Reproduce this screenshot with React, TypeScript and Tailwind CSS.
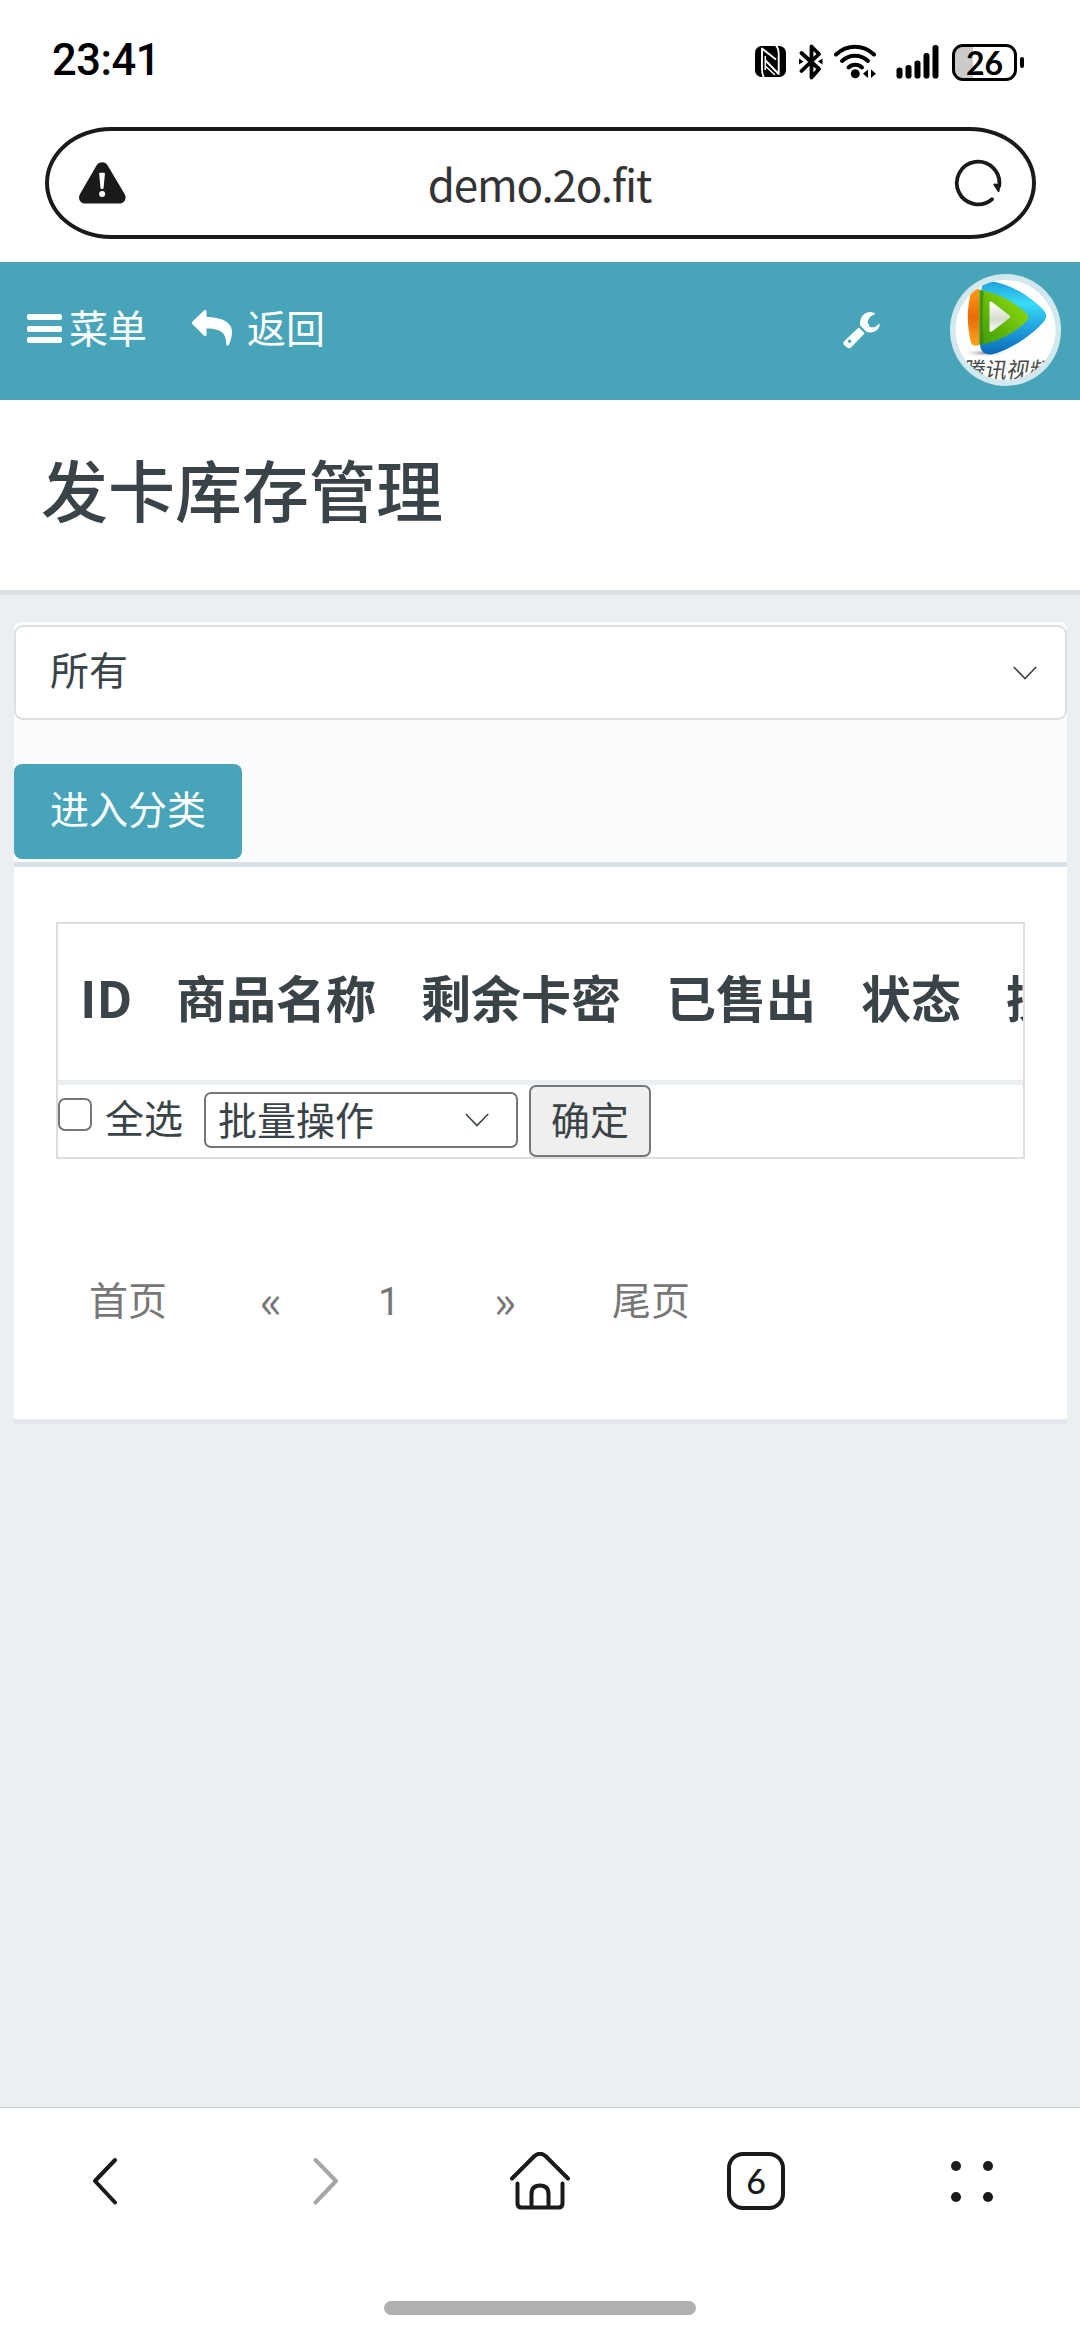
import React from "react";

type IconProps = {
  className?: string;
};

const COLUMNS = ["ID", "商品名称", "剩余卡密", "已售出", "状态", "操作"];

const NfcIcon = () => (
  <svg className="w-[31px] h-[31px] shrink-0" viewBox="755 46 31 31">
    <rect x="755" y="46" width="31" height="31" rx="6.5" fill="#000" />
    <g fill="none" stroke="#fff" strokeWidth="1.900" strokeLinejoin="round">
      <path d="M764 77.500c-1.500-2-2-5-2-9V48.500l14 11" />
      <path d="M776 45.500c2 2 2.700 5 2.700 9v19.500L765.500 60.500" />
      <path d="M765.300 56v14M765.300 66l9.700 9" strokeWidth="1.500" />
    </g>
  </svg>
);

const BluetoothIcon = () => (
  <svg className="w-[24px] h-[36px] shrink-0" viewBox="799 44 24 36" fill="none" stroke="#000">
    <path d="M801.500 53l17.500 16-7.500 8.500V46.500l7.500 7.500-17.500 17" strokeWidth="3.800" strokeLinejoin="round" strokeLinecap="round" />
    <path d="M799 58.500v6l4.500-3zM822.500 58.500v6l-4.500-3z" fill="#000" stroke="none" />
  </svg>
);

const WifiIcon = () => (
  <svg className="w-[44px] h-[36px] shrink-0" viewBox="834 44 44 36" fill="none" stroke="#000" strokeWidth="4" strokeLinecap="round">
    <path d="M836 54.500c11-10.500 27-10.500 38 0" />
    <path d="M842 61c7.500-7 18.500-7 26 0" />
    <path d="M848.500 67.500c4-3.700 9.500-3.700 13.500 0" />
    <circle cx="855.300" cy="73.700" r="4.500" fill="#000" stroke="none" />
    <path d="M868 69.500v8.500l-5-4.200zM871 69.500v8.500l5-4.200z" fill="#000" stroke="none" />
  </svg>
);

const SignalIcon = () => (
  <svg className="w-[43px] h-[34px] shrink-0" viewBox="896 45 43 34" fill="#000">
    <rect x="896.500" y="67.500" width="6" height="11" rx="2.800" />
    <rect x="905.500" y="65" width="6" height="13.500" rx="2.800" />
    <rect x="914.500" y="60.500" width="6" height="18" rx="2.800" />
    <rect x="923.500" y="53" width="6" height="25.500" rx="2.800" />
    <rect x="932.500" y="45" width="6" height="33.500" rx="2.800" />
  </svg>
);

const WarningIcon = () => (
  <svg className="w-[47px] h-[42px] shrink-0" viewBox="79 162.500 47 42">
    <path
      d="M96.500 166c2.500-4.300 8.700-4.300 11.200 0l16.900 28.500c2.500 4.300-.2 9.500-5 9.500H85c-4.900 0-7.500-5.200-5-9.500z"
      fill="#1a1a1a"
    />
    <path d="M99.200 174.300c0-.8.600-1.100 1.200-1.100h3.300c.6 0 1.200.3 1.200 1.100l-1.300 14.200c-.2 1.400-2.900 1.400-3.100 0z" fill="#fff" />
    <circle cx="102.100" cy="194.600" r="3" fill="#fff" />
  </svg>
);

const ReloadIcon = () => (
  <svg className="w-[48px] h-[48px] shrink-0" viewBox="953.500 159 48 48" fill="none" stroke="#1a1a1a" strokeWidth="3.800" strokeLinecap="round">
    <path d="M991.500 199.200A21.300 21.300 0 1 1 998.700 186" />
    <path d="M993.800 184.500l5.200.5-1 6z" fill="#1a1a1a" strokeWidth="2" strokeLinejoin="round" />
  </svg>
);

const ReplyIcon = () => (
  <svg className="w-[40px] h-[36px] shrink-0" viewBox="192 310.500 40 36" fill="#fff">
    <path d="M192.300 322.200l11.600-11.200c1.200-1.100 2.600-.5 2.600 1v5.500c15.500.300 25.500 5.500 25.500 14.500 0 5.500-1.700 10-3.400 14h-2.300c.3-12-4.500-16.800-19.800-17v6c0 1.600-1.400 2.100-2.600 1l-11.600-11.600c-.7-.7-.7-1.500 0-2.200z" />
  </svg>
);

const WrenchIcon = () => (
  <svg className="w-[37px] h-[37px] shrink-0" viewBox="843 311.500 37 37" fill="#fff">
    <path d="M875.200 313.500l-5.200 2.700-2.500 4.800 2.300 5.700h5l4.800-3.700c.5 4.700-3.700 9-9.300 9-1.500 0-3-.4-4.200-1l-6-6c-.9-6.800 3.500-13.500 10-13.500 2 0 4 .6 5.100 2z" />
    <path
      fillRule="evenodd"
      d="M858.700 327l6 5.800-13.200 13.800c-1.300 1.400-3 1.500-4.200.6l-3.200-2.600c-1.100-1.100-1-2.700 0-3.800zM849.600 339a1.700 1.700 0 1 0 .01 0z"
    />
  </svg>
);

const Chevron = ({ className }: IconProps) => (
  <svg className={`w-[24px] h-[14px] shrink-0 ${className ?? ""}`} viewBox="0 0 24 14" fill="none" stroke="#3d4446" strokeWidth="1.600">
    <path d="M.8 1L12 12.500 23.200 1" />
  </svg>
);

const Avatar = () => (
  <div className="w-[111px] h-[112px] shrink-0 rounded-full overflow-hidden">
    <svg className="block w-full h-full" viewBox="950 274 111 112">
      <defs>
        <linearGradient id="blue" x1="0" y1="0" x2="0" y2="1">
          <stop offset="0" stopColor="#1fa0dc" />
          <stop offset=".3" stopColor="#38dcf5" />
          <stop offset=".6" stopColor="#25a8e4" />
          <stop offset="1" stopColor="#0868b4" />
        </linearGradient>
        <linearGradient id="green" x1="0" y1="1" x2="1" y2="0">
          <stop offset="0" stopColor="#3d9a08" />
          <stop offset="1" stopColor="#9ae30c" />
        </linearGradient>
        <linearGradient id="orange" x1="0" y1="0" x2="0" y2="1">
          <stop offset="0" stopColor="#ff9a12" />
          <stop offset=".5" stopColor="#e86c08" />
          <stop offset="1" stopColor="#ffa51c" />
        </linearGradient>
        <linearGradient id="play" x1="0" y1="0" x2="0" y2="1">
          <stop offset="0" stopColor="#fff" />
          <stop offset=".6" stopColor="#d5ddcc" />
          <stop offset="1" stopColor="#fff" />
        </linearGradient>
        <radialGradient id="shade">
          <stop offset="0" stopColor="#888" />
          <stop offset="1" stopColor="#fff" stopOpacity="0" />
        </radialGradient>
        <clipPath id="face">
          <circle cx="1005.500" cy="330" r="50" />
        </clipPath>
      </defs>
      <rect x="950" y="274" width="111" height="112" fill="#d1e8ee" />
      <circle cx="1005.500" cy="330" r="50" fill="#fff" />
      <g clipPath="url(#face)">
        <ellipse cx="985" cy="353" rx="24" ry="4" fill="url(#shade)" />
        <path d="M981.500 289c0-6 5-8.500 12-7.500 17 3 37 15 50 28.500 3.500 4 3.500 8 0 12-12 13.500-31 26.500-49 31.800-8 2-14-1-14.500-9z" fill="url(#blue)" />
        <path d="M971 292c1-3 3-3.500 8.500-2.500v55.500c-5 1.500-7.500.5-8.300-2-4.500-17-4.500-34-.2-51z" fill="url(#orange)" />
        <path d="M979.500 290c15 2 34 11 47.500 24 2 2.200 2 4.500 0 6.800-12 12-30 21.500-47.500 24z" fill="url(#green)" />
        <path d="M979.500 290c2.500.3 3 1 4.500 2-2 15-2 34 0 51.500-1 .5-2 .6-4.500 1.300z" fill="#2f8512" opacity=".65" />
        <path d="M989.500 303c0-1.500 1.200-2 2.400-1.200l17.600 13.700c1 .8 1 1.700 0 2.500l-17.600 13.400c-1.200.8-2.400.3-2.400-1.200z" fill="url(#play)" />
        <text x="0" y="0" transform="translate(962 377.500) skewX(-10)" fontSize="22" fontFamily="'Noto Sans CJK SC', sans-serif" fill="#4a4a4a">
          腾讯视频
        </text>
      </g>
    </svg>
  </div>
);

// Barre d'état du téléphone
const StatusBar = () => (
  <div className="flex items-start h-[127px] pl-[52px]">
    <span className="mt-[36px] w-[120px] font-['Roboto','Noto_Sans_CJK_SC',sans-serif] font-medium text-[43.5px] leading-[50px] tracking-[-0.5px] text-black">
      23:41
    </span>
    <div className="flex ml-[583px] mt-[44px]">
      <div className="mt-[2px] mr-[13px]">
        <NfcIcon />
      </div>
      <BluetoothIcon />
      <div className="ml-[11px]">
        <WifiIcon />
      </div>
      <div className="ml-[18px] mt-px">
        <SignalIcon />
      </div>
      <div className="relative ml-[13px] w-[65px] h-[37px] rounded-[11px] border-[3px] border-black overflow-hidden bg-linear-to-r from-[#cbcbcb] from-[31%] to-white to-[31%] flex items-center justify-center">
        <span className="font-['Lato',sans-serif] font-bold text-[32px] leading-[32px] text-black">26</span>
      </div>
      <div className="ml-[3px] mt-[13px] w-[4px] h-[11px] rounded-full bg-black" />
    </div>
  </div>
);

const AddressBar = () => (
  <div className="ml-[44.5px] w-[991px] h-[112px] mb-[23px] shrink-0 flex items-center justify-between border-4 border-[#1a1a1a] rounded-[66px/56px] pl-[30px] pr-[30px]">
    <WarningIcon />
    <span className="font-['Noto_Sans_CJK_SC',sans-serif] text-[44px] leading-[60px] tracking-[-1.2px] text-[#333]">demo.2o.fit</span>
    <ReloadIcon />
  </div>
);

const Navbar = () => (
  <div className="h-[138px] flex items-start bg-[#48a5b9] text-white text-[39px] leading-[58px]">
    <div className="flex items-center ml-[27px] mt-[37px] h-[58px]">
      <div className="w-[35px] h-[29px] flex flex-col justify-between mt-px">
        <span className="h-[6px] rounded-[2px] bg-white" />
        <span className="h-[6px] rounded-[2px] bg-white" />
        <span className="h-[6px] rounded-[2px] bg-white" />
      </div>
      <span className="ml-[7px] -mt-[5px] w-[79px]">菜单</span>
    </div>
    <div className="flex items-center ml-[44px] mt-[37px] h-[58px]">
      <ReplyIcon />
      <span className="ml-[15px] -mt-[5px] w-[78px]">返回</span>
    </div>
    <div className="ml-[518px] mt-[50px]">
      <WrenchIcon />
    </div>
    <div className="ml-[70px] mt-[12px]">
      <Avatar />
    </div>
  </div>
);

const StockTable = () => (
  <div className="mx-[42px] mt-[55px] h-[237px] border-2 border-[#ddd] overflow-hidden">
    <div className="flex gap-[45px] h-[161px] pl-[22px] pt-[35px] border-b-[5px] border-[#eceff1] text-[50px] leading-[74px] font-bold whitespace-nowrap">
      {COLUMNS.map((name, index) => (
        <span key={name} className={index === 0 ? "w-[51px] shrink-0" : "shrink-0"}>
          {name}
        </span>
      ))}
    </div>
    <div className="flex items-start text-[39px] leading-[52px]">
      <div className="mt-[13px] w-[34px] h-[33px] border-[2.5px] border-[#767676] rounded-[7px] bg-white" />
      <span className="ml-[13px] mt-[5px] w-[79px]">全选</span>
      <div className="ml-[20px] mt-[7px] w-[314px] h-[56px] flex items-center border-2 border-[#767676] rounded-[7px] pl-[12px]">
        <span className="-mt-[4px] w-[157px]">批量操作</span>
        <Chevron className="ml-[90px]" />
      </div>
      <div className="ml-[11px] w-[122px] h-[72px] flex items-center justify-center border-2 border-[#767676] rounded-[7px] bg-[#efefef]">
        <span className="-mt-[7px]">确定</span>
      </div>
    </div>
  </div>
);

const Pagination = () => (
  <div className="flex mt-[97px] ml-[75px] text-[39px] leading-[84px] text-[#777]">
    <span className="w-[171px]">首页</span>
    <span className="w-[118px] text-[46px]">«</span>
    <span className="w-[116px] pt-[4px] font-['Roboto',sans-serif]">1</span>
    <span className="w-[118px] text-[46px]">»</span>
    <span>尾页</span>
  </div>
);

const BottomNav = () => (
  <div className="h-[224px] shrink-0 bg-white border-t border-[#cdd3d3]">
    <div className="flex items-center h-[146px] -mb-px">
      <svg className="ml-[93px] w-[24px] h-[48px]" viewBox="0 0 24 48" fill="none" stroke="#1a1a1a" strokeWidth="4" strokeLinecap="round" strokeLinejoin="round">
        <path d="M22 3L2 24l20 21.500" />
      </svg>
      <svg className="ml-[196px] w-[25px] h-[48px]" viewBox="0 0 25 48" fill="none" stroke="#a6a6a6" strokeWidth="4" strokeLinecap="round" strokeLinejoin="round">
        <path d="M2.500 3L23 24 2.500 45.500" />
      </svg>
      <svg className="ml-[172px] w-[60px] h-[58px]" viewBox="510 2152 60 58" fill="none" stroke="#1a1a1a" strokeWidth="4" strokeLinecap="round" strokeLinejoin="round">
        <path d="M512 2178.500l22.500-22.500q5.500-4.500 11 0l22.500 22.500" />
        <path d="M517.500 2183.500v20q0 4 4 4h37q4 0 4-4v-20" />
        <path d="M531.500 2207v-13q0-8.500 8.500-8.500t8.500 8.500v13" />
      </svg>
      <div className="ml-[157px] w-[58px] h-[58px] border-4 border-[#1a1a1a] rounded-[16px] flex items-center justify-center font-['Lato',sans-serif] text-[34px] leading-[50px] font-medium text-[#1a1a1a]">
        6
      </div>
      <div className="ml-[166px] grid grid-cols-2 gap-x-[22px] gap-y-[21px]">
        <span className="w-[10px] h-[10px] rounded-full bg-[#1a1a1a]" />
        <span className="w-[10px] h-[10px] rounded-full bg-[#1a1a1a]" />
        <span className="w-[10px] h-[10px] rounded-full bg-[#1a1a1a]" />
        <span className="w-[10px] h-[10px] rounded-full bg-[#1a1a1a]" />
      </div>
    </div>
    <div className="mx-auto mt-[48px] w-[312px] h-[14px] rounded-full bg-[#b0b0b0]" />
  </div>
);

export default function App() {
  return (
    <div className="w-[1080px] h-[2331px] overflow-hidden flex flex-col bg-white text-[#3a4448] font-['Noto_Sans_CJK_SC',sans-serif]">
      <StatusBar />
      <AddressBar />
      <Navbar />

      <h1 className="h-[195px] shrink-0 pl-[41px] pt-[39px] border-b-[5px] border-[#dae1e6] text-[67px] leading-[98px] font-medium">
        发卡库存管理
      </h1>

      <main className="flex-1 bg-[#ebeff2] pl-[14px] pr-[13px] pt-[27px]">
        <section className="h-[802px] bg-white border-b-[5px] border-[#e4e8ee] rounded-t-[8px]">
          {/* Filtre par catégorie */}
          <div className="h-[245px] pt-[3px] bg-[#fafcfd] border-b-[5px] border-[#dae0e4] rounded-t-[8px]">
            <div className="h-[95px] flex items-center justify-between border-2 border-[#dae0e3] rounded-[9px] bg-white pl-[34px] pr-[28px] text-[39px] leading-[58px]">
              <span className="-mt-[9px]">所有</span>
              <Chevron />
            </div>
            <div className="mt-[44px] w-[228px] h-[95px] flex items-center justify-center rounded-[8px] bg-[#48a5b9] text-white text-[39px] leading-[58px]">
              <span className="-mt-[9px]">进入分类</span>
            </div>
          </div>
          <StockTable />
          <Pagination />
        </section>
      </main>

      <BottomNav />
    </div>
  );
}
